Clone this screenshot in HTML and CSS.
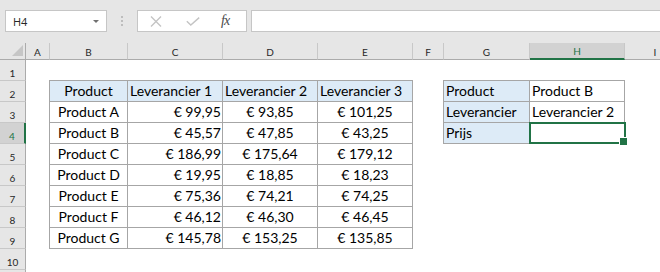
FILE: index.html
```html
<!DOCTYPE html>
<html>
    <head>
        <meta charset="utf-8">
        <title>Prijs opzoeken</title>
        <link rel="stylesheet" href="styles.css">
    </head>
    <body>
        <div class="toolbar">
            <div class="namebox">
                <span>H4</span>
                <span class="caret"></span>
            </div>
            <div class="grip"><i></i><i></i><i></i></div>
            <div class="fxbox">
                <svg class="cancel" width="12" height="11" viewBox="0 0 12 11">
                    <path d="M1 0.5 L11 10.5 M11 0.5 L1 10.5" />
                </svg>
                <svg class="enter" width="14" height="9" viewBox="0 0 14 9">
                    <path d="M0.8 4.2 L4.8 8 L13.2 0.6" />
                </svg>
                <span class="fx">fx</span>
            </div>
            <div class="formula"></div>
        </div>

        <div class="sheet">
            <!-- column headers -->
            <div class="corner"></div>
            <div class="colhdr">A</div>
            <div class="colhdr">B</div>
            <div class="colhdr">C</div>
            <div class="colhdr">D</div>
            <div class="colhdr">E</div>
            <div class="colhdr">F</div>
            <div class="colhdr">G</div>
            <div class="colhdr sel">H</div>
            <div class="colhdr">I</div>
            <div class="colhdr"></div>

            <div class="rowhdr">1</div>

            <div class="rowhdr">2</div>
            <div class="cell hd col-b top c">Product</div>
            <div class="cell hd top">Leverancier 1</div>
            <div class="cell hd top">Leverancier 2</div>
            <div class="cell hd top">Leverancier 3</div>
            <div class="cell hd col-g top">Product</div>
            <div class="cell top">Product B</div>

            <div class="rowhdr">3</div>
            <div class="cell col-b c">Product A</div>
            <div class="cell r">€ 99,95</div>
            <div class="cell c">€ 93,85</div>
            <div class="cell c">€ 101,25</div>
            <div class="cell hd col-g">Leverancier</div>
            <div class="cell">Leverancier 2</div>

            <div class="rowhdr sel">4</div>
            <div class="cell col-b c">Product B</div>
            <div class="cell r">€ 45,57</div>
            <div class="cell c">€ 47,85</div>
            <div class="cell c">€ 43,25</div>
            <div class="cell hd col-g">Prijs</div>
            <div class="cell active"></div>

            <div class="rowhdr">5</div>
            <div class="cell col-b c">Product C</div>
            <div class="cell r">€ 186,99</div>
            <div class="cell c">€ 175,64</div>
            <div class="cell c">€ 179,12</div>

            <div class="rowhdr">6</div>
            <div class="cell col-b c">Product D</div>
            <div class="cell r">€ 19,95</div>
            <div class="cell c">€ 18,85</div>
            <div class="cell c">€ 18,23</div>

            <div class="rowhdr">7</div>
            <div class="cell col-b c">Product E</div>
            <div class="cell r">€ 75,36</div>
            <div class="cell c">€ 74,21</div>
            <div class="cell c">€ 74,25</div>

            <div class="rowhdr">8</div>
            <div class="cell col-b c">Product F</div>
            <div class="cell r">€ 46,12</div>
            <div class="cell c">€ 46,30</div>
            <div class="cell c">€ 46,45</div>

            <div class="rowhdr">9</div>
            <div class="cell col-b c">Product G</div>
            <div class="cell r">€ 145,78</div>
            <div class="cell c">€ 153,25</div>
            <div class="cell c">€ 135,85</div>

            <div class="rowhdr">10</div>
            <div class="rowhdr last"></div>
        </div>
    </body>
</html>
```

FILE: styles.css
```css
* {
    margin: 0;
    padding: 0;
    box-sizing: border-box;
}

body {
    width: 660px;
    height: 272px;
    overflow: hidden;
    background: #fff;
    font-family: Lato, 'Liberation Sans', sans-serif;
    color: #000;
}

/* formula bar */
.toolbar {
    height: 43px;
    display: flex;
    align-items: flex-start;
    padding: 10px 0 0 5px;
    background: #e6e6e6;
}

.namebox {
    width: 102px;
    height: 22px;
    display: flex;
    align-items: center;
    justify-content: space-between;
    padding: 0 7px;
    background: #fff;
    border: 1px solid #c6c6c6;
    font: 11px 'Open Sans', sans-serif;
    color: #262626;
}

.caret {
    width: 0;
    height: 0;
    border-left: 3px solid transparent;
    border-right: 3px solid transparent;
    border-top: 3px solid #707070;
}

.grip {
    display: flex;
    flex-direction: column;
    gap: 2px;
    margin: 6px 0 0 14px;
}

.grip i {
    width: 2px;
    height: 2px;
    background: #bdbdbd;
}

.fxbox {
    width: 110px;
    height: 22px;
    display: flex;
    align-items: center;
    margin-left: 14px;
    padding-left: 12px;
    background: #fff;
    border: 1px solid #c6c6c6;
}

.fxbox svg path {
    fill: none;
    stroke: #c4c4c4;
    stroke-width: 1.4;
}

.enter {
    margin-left: 24px;
}

.fx {
    margin-left: 21px;
    font: italic 14px 'Liberation Serif', serif;
    letter-spacing: -1px;
    color: #4a4a4a;
}

.formula {
    flex: 1;
    height: 22px;
    margin: 0 -2px 0 4px;
    background: #fff;
    border: 1px solid #c6c6c6;
}

/* worksheet */
.sheet {
    display: grid;
    grid-template-columns: 26px 24px 78px 95px 95px 95px 31px 86px 95px 61px 1fr;
    grid-template-rows: 17px;
    grid-auto-rows: 21px;
}

.corner,
.colhdr,
.rowhdr {
    display: flex;
    align-items: flex-end;
    justify-content: center;
    background: #e6e6e6;
    font-size: 10px;
    line-height: 14px;
    color: #262626;
}

.corner,
.colhdr {
    border-right: 1px solid #c8c8c8;
    border-bottom: 1px solid #ababab;
}

.corner {
    position: relative;
    border-right-color: #ababab;
}

.corner::after {
    content: '';
    position: absolute;
    right: 2px;
    bottom: 3px;
    border-left: 11px solid transparent;
    border-bottom: 11px solid #c6c6c6;
}

.rowhdr {
    grid-column: 1;
    border-right: 1px solid #ababab;
    border-bottom: 1px solid #c8c8c8;
}

.rowhdr.last {
    border-bottom: none;
}

.colhdr.sel,
.rowhdr.sel {
    background: #d2d2d2;
    color: #217346;
}

.colhdr.sel {
    border-bottom: 2px solid #217346;
}

.rowhdr.sel {
    border-right: 2px solid #217346;
}

.cell {
    padding: 0 2px;
    border-right: 1px solid #a6a6a6;
    border-bottom: 1px solid #a6a6a6;
    font-size: 14px;
    line-height: 20px;
    white-space: nowrap;
}

.col-b,
.col-g {
    margin-left: -1px;
    border-left: 1px solid #a6a6a6;
}

.col-b {
    grid-column: 3;
}

.col-g {
    grid-column: 8;
}

.top {
    margin-top: -1px;
    border-top: 1px solid #a6a6a6;
}

.hd {
    background: #ddebf7;
}

.c {
    text-align: center;
}

.r {
    text-align: right;
    padding-right: 1px;
}

/* selected cell H4 */
.active {
    position: relative;
}

.active::before {
    content: '';
    position: absolute;
    top: -1px;
    left: -1px;
    right: -2px;
    bottom: -1px;
    border: 2px solid #217346;
}

.active::after {
    content: '';
    position: absolute;
    right: -4px;
    bottom: -3px;
    width: 7px;
    height: 7px;
    background: #217346;
    border: 1px solid #fff;
}
```
